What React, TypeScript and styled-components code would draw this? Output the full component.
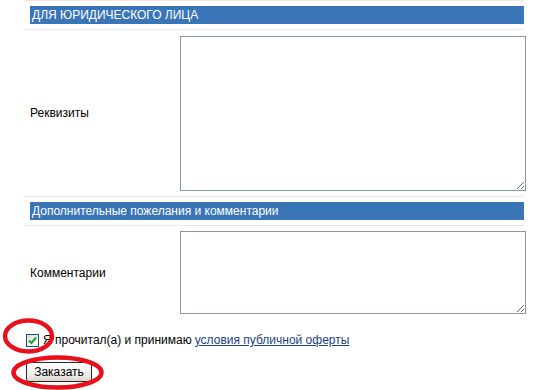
import React from "react";
import styled, { createGlobalStyle } from "styled-components";

const Global = createGlobalStyle`
  html, body { margin: 0; padding: 0; background: #fff; }
  body { font-family: "Liberation Sans", Arial, sans-serif; font-size: 12px; color: #000; }
`;

const Page = styled.div`
  position: relative;
  width: 537px;
  height: 390px;
  overflow: hidden;
`;

const Form = styled.div`
  margin-left: 24px;
  width: 500px;
  display: flex;
  flex-direction: column;
  border-top: 1px solid #e8e8ee;
`;

const HeaderRow = styled.div`
  padding: 5px 0 5px 6px;
  border-bottom: 1px solid #e8e8ee;
`;

const HeaderBar = styled.div`
  height: 18px;
  background: #3a75b7;
  color: #fff;
  line-height: 18px;
  padding-left: 2px;
  font-size: 12px;
  white-space: nowrap;
`;

const FieldRow = styled.div<{ $h: number; $last?: boolean }>`
  display: grid;
  grid-template-columns: 156px 346px;
  align-items: center;
  height: ${(p) => p.$h}px;
  border-bottom: 1px solid ${(p) => (p.$last ? "transparent" : "#e8e8ee")};
`;

const Label = styled.div`
  padding-left: 6px;
  font-size: 12px;
`;

const Area = styled.textarea<{ $h: number }>`
  box-sizing: border-box;
  width: 346px;
  height: ${(p) => p.$h}px;
  border: 1px solid #8797a6;
  resize: both;
  font-family: inherit;
  margin: 0;
  padding: 2px;
  display: block;
`;

const Bottom = styled.div`
  margin-left: 26px;
  margin-top: 13px;
  display: flex;
  flex-direction: column;
  gap: 15px;
`;

const CheckLine = styled.label`
  display: flex;
  align-items: center;
  gap: 4px;
  font-size: 12px;
  height: 14px;
`;

const Box = styled.span`
  box-sizing: border-box;
  width: 13px;
  height: 13px;
  border: 1px solid #1c5180;
  background: linear-gradient(135deg, #dcdcd6, #fff);
  display: inline-flex;
  align-items: center;
  justify-content: center;
`;

const Link = styled.a`
  color: #1c3f7e;
  text-decoration: underline;
  margin-left: 3px;
`;

const Button = styled.button`
  align-self: flex-start;
  box-sizing: border-box;
  width: 66px;
  height: 20px;
  border: 1px solid #2a2a2a;
  border-radius: 3px;
  background: linear-gradient(#fefefe, #ecebe6 70%, #d8d5cc);
  font-family: inherit;
  font-size: 12px;
  color: #000;
  padding: 0;
`;

const Marks = styled.svg`
  position: absolute;
  left: 0;
  top: 0;
  pointer-events: none;
`;

export default function App() {
  return (
    <Page>
      <Global />
      <Form>
        <HeaderRow>
          <HeaderBar>ДЛЯ ЮРИДИЧЕСКОГО ЛИЦА</HeaderBar>
        </HeaderRow>
        <FieldRow $h={166}>
          <Label>Реквизиты</Label>
          <Area $h={155} />
        </FieldRow>
        <HeaderRow>
          <HeaderBar>Дополнительные пожелания и комментарии</HeaderBar>
        </HeaderRow>
        <FieldRow $h={93} $last>
          <Label>Комментарии</Label>
          <Area $h={83} />
        </FieldRow>
      </Form>
      <Bottom>
        <CheckLine>
          <Box>
            <svg width="9" height="9" viewBox="0 0 9 9">
              <path d="M1 4.5 L3.5 7 L8 1.5" stroke="#21a121" strokeWidth="2" fill="none" />
            </svg>
          </Box>
          <span>
            Я прочитал(а) и принимаю
            <Link href="#">условия публичной оферты</Link>
          </span>
        </CheckLine>
        <Button>Заказать</Button>
      </Bottom>
      <Marks width="537" height="390">
        <ellipse cx="28.5" cy="336" rx="23.5" ry="15.5" fill="none" stroke="#e8101a" strokeWidth="4.5" />
        <ellipse cx="57.5" cy="372.5" rx="44" ry="15" fill="none" stroke="#e8101a" strokeWidth="4.5" />
      </Marks>
    </Page>
  );
}
